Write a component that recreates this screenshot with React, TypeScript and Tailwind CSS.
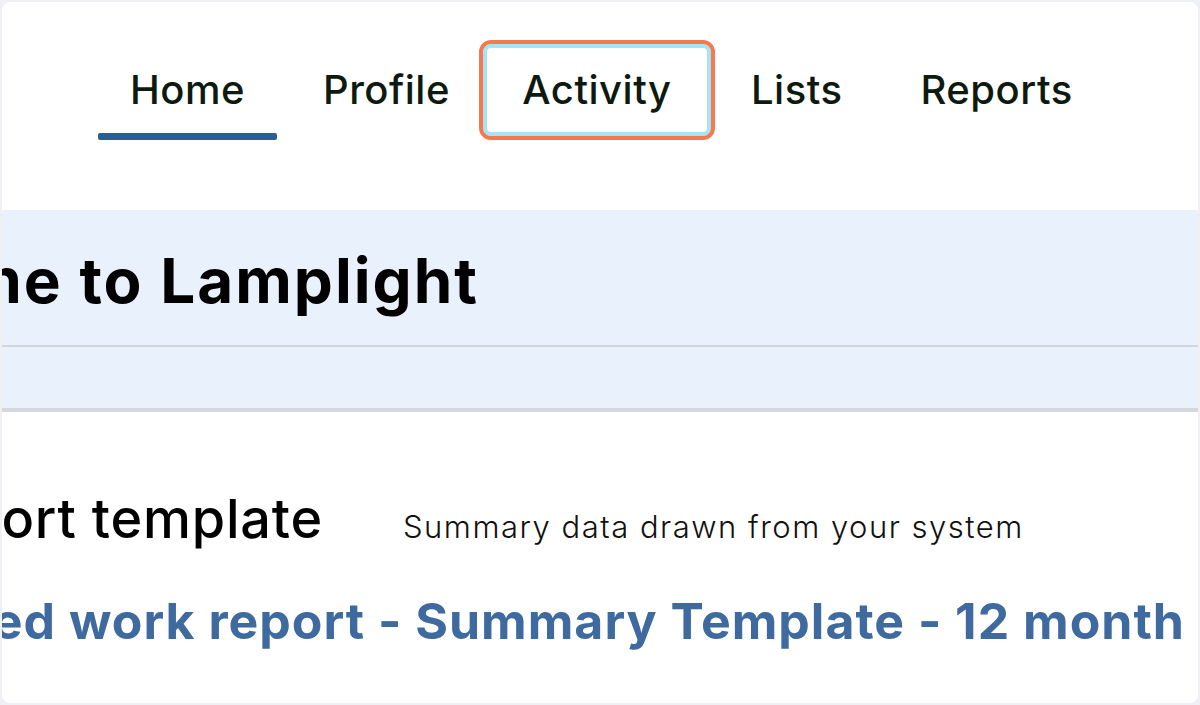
import React from 'react';

const NAV = ['Home', 'Profile', 'Activity', 'Lists', 'Reports'];

const App: React.FC = () => {
  return (
    <div className="w-[1200px] h-[705px] bg-[#eff0f6] p-[2px] overflow-hidden" style={{ fontFamily: 'Inter, "Noto Sans", sans-serif' }}>
      <div className="h-full w-full bg-white rounded-[8px] overflow-hidden flex flex-col">
        {/* top navigation */}
        <nav className="h-[208px] shrink-0 pt-[38px] pl-[96px] flex items-start gap-[14px]">
          {NAV.map((item) => {
            const active = item === 'Home';
            const focused = item === 'Activity';
            if (focused) {
              return (
                <div
                  key={item}
                  className="-ml-[17px] -mr-[10px] w-[236px] h-[100px] flex items-center justify-center rounded-[12px] border-[4px] border-[#f47a4e] shadow-[inset_0_0_0_4px_#a6e3fb] text-[40px] font-medium text-[#0e1a10] leading-none tracking-[0.5px]"
                >
                  {item}
                </div>
              );
            }
            return (
              <div key={item} className="relative h-[100px] px-[32px] flex items-center text-[40px] font-medium text-[#0e1a10] leading-none tracking-[0.5px]">
                {item}
                {active && <div className="absolute left-0 right-0 bottom-0 h-[7px] rounded-[2px] bg-[#2b5e98]" />}
              </div>
            );
          })}
        </nav>

        {/* welcome band */}
        <div className="shrink-0 bg-[#e9f1fd] border-b-[4px] border-[#d4d7dc]">
          <div className="h-[137px] border-b-[2px] border-[#d2d5da] flex items-center">
            <div className="w-[477px] shrink-0 flex justify-end pt-[6px]">
              <h1 className="whitespace-nowrap text-[62px] font-bold text-black tracking-[2px] leading-none">
                Welcome to Lamplight
              </h1>
            </div>
          </div>
          <div className="h-[61px]" />
        </div>

        {/* report template */}
        <div className="flex-1 pt-[76px]">
          <div className="flex items-baseline whitespace-nowrap">
            <div className="w-[321px] shrink-0 flex justify-end">
              <h2 className="text-[54px] font-medium text-black leading-[62px] tracking-[0.8px]">Report template</h2>
            </div>
            <p className="ml-[80px] text-[31px] font-light text-[#111] tracking-[1.5px]">
              Summary data drawn from your system
            </p>
          </div>
          <div className="mt-[40px] w-[1183px] flex justify-end">
            <a className="whitespace-nowrap text-[50px] font-bold text-[#3e6a9f] leading-[60px] tracking-[1px]">
              Detailed work report - Summary Template - 12 month
            </a>
          </div>
        </div>
      </div>
    </div>
  );
};

export default App;
